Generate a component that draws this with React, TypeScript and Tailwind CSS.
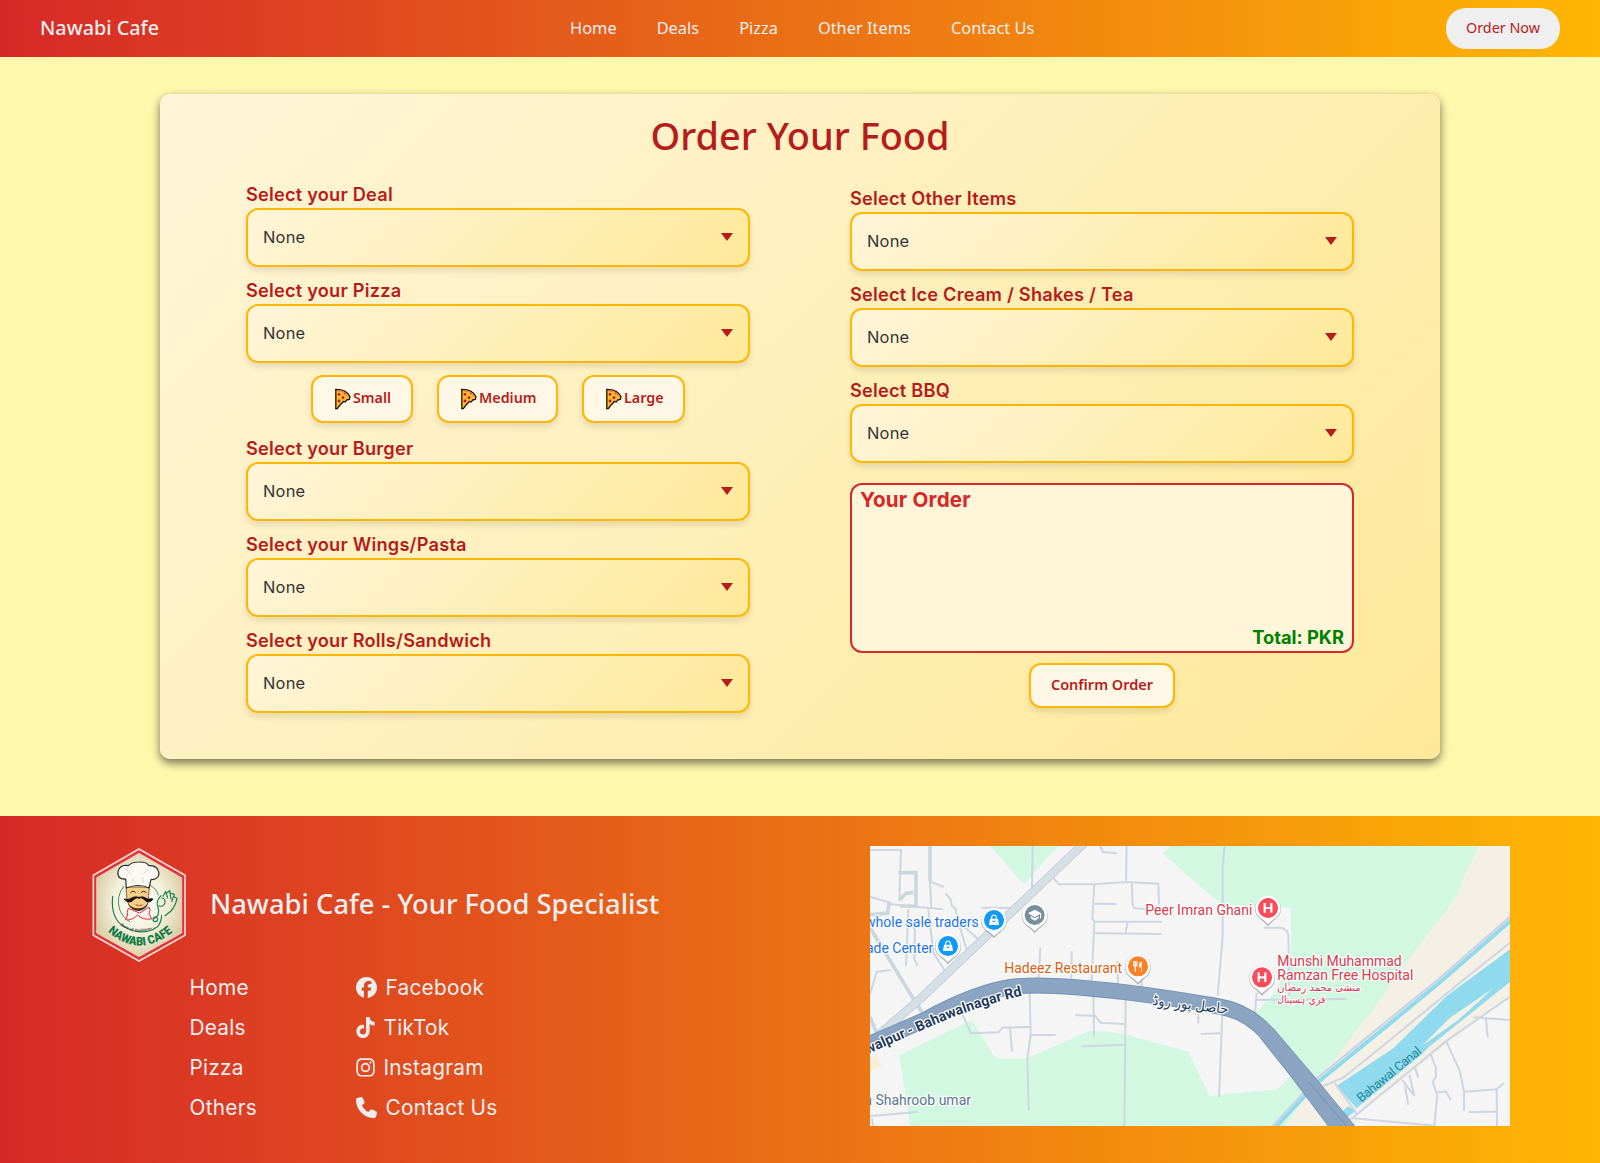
import React from "react";
import { FaFacebook, FaTiktok, FaInstagram, FaPhone } from "react-icons/fa6";

const heading = "font-['Noto_Sans',sans-serif]";
const body = "font-['Inter',sans-serif]";

function PizzaSlice() {
  return (
    <svg className="-mt-px h-[22px] w-5 shrink-0" viewBox="98 65 60 66" aria-hidden="true">
      <path d="M106 70 L106 127 L111 127 L120 115 L130 105 L135 107 L139 101 L147 99 L149 91 Q140 70 106 69 Z" fill="#fdbb2d" stroke="#17120c" strokeWidth="4" strokeLinejoin="round" />
      <path d="M112 74 Q134 73 143 90" fill="none" stroke="#f0824a" strokeWidth="4" />
      <path d="M106 71 V126" stroke="#4a3a10" strokeWidth="4" />
      <circle cx="116" cy="84" r="4" fill="#c8102e" />
      <circle cx="128" cy="94" r="4.2" fill="#c8102e" />
      <circle cx="116" cy="104" r="4.2" fill="#c8102e" />
      <circle cx="133" cy="82" r="2.6" fill="#d8432e" />
    </svg>
  );
}

function Field({ label }: { label: string }) {
  return (
    <div className="mb-[10px]">
      <div className={`${body} h-[27px] leading-[27px] text-[18.2px] font-semibold tracking-[0.22px] text-[#b71c1c] whitespace-nowrap`}>{label}</div>
      <button className="flex h-[59px] w-full items-center justify-between rounded-[12px] border-2 border-[#ffb703] bg-[linear-gradient(135deg,#fff5d9,#ffe999)] bg-origin-border pb-px pl-[15px] pr-[15px] shadow-[0_4px_6px_rgba(0,0,0,0.1)]">
        <span className={`${body} text-[16.4px] tracking-[0.25px] text-[#333]`}>None</span>
        <svg className="h-2 w-3" viewBox="0 0 12 8" aria-hidden="true"><path d="M0 0H12L6 8Z" fill="#b71c1c" /></svg>
      </button>
    </div>
  );
}

function SizeButton({ name, width }: { name: string; width: string }) {
  return (
    <button className={`${heading} ${width} flex h-12 items-center rounded-[12px] border-2 border-[#ffb703] bg-[#fff8e6] pl-5 text-[14.3px] font-semibold text-[#b71c1c] shadow-[0_4px_6px_rgba(0,0,0,0.1)]`}>
      <PizzaSlice />
      <span className="-mt-[3px]">{name}</span>
    </button>
  );
}

function Logo() {
  return (
    <svg className="h-[114px] w-[94px] shrink-0" viewBox="37 55 282 342" aria-label="Nawabi Cafe logo">
      <defs>
        <radialGradient id="cream" cx="50%" cy="48%" r="55%">
          <stop offset="0" stopColor="#ffffff" />
          <stop offset="0.55" stopColor="#f5f0dc" />
          <stop offset="1" stopColor="#d8cda4" />
        </radialGradient>
        <path id="nameArc" d="M84 306 Q180 390 282 304" />
        <path id="tagArc" d="M122 287 Q170 318 216 298" />
      </defs>
      <path d="M178 58 L316 137 V317 L178 394 L41 317 V137 Z" fill="#e0343a" stroke="#f6dcd2" strokeWidth="5" strokeLinejoin="round" />
      <path d="M178 71 L306 144 V310 L178 381 L51 310 V144 Z" fill="url(#cream)" stroke="#f3e6cf" strokeWidth="2" />
      <g fill="none" stroke="#14804c" strokeWidth="3.5" strokeLinecap="round">
        <path d="M99 200 Q92 268 135 292 Q190 322 232 292 Q244 282 246 258" />
        <path d="M132 170 Q108 200 120 240 Q128 262 150 276" strokeWidth="2.5" />
        <path d="M210 166 Q232 178 236 196" strokeWidth="2.5" />
        <path d="M244 198 Q228 216 234 230 Q240 246 234 258 L222 268 M246 205 Q258 206 256 220 Q250 234 238 228 M250 200 L258 186 L264 205 M262 190 L270 183 L274 208 M272 190 L284 194 L276 215 M284 202 L292 206 Q288 228 274 244 L256 258" />
        <circle cx="227" cy="269" r="7" />
      </g>
      <path d="M139 172 L142 212 Q150 240 178 243 Q204 238 206 208 L209 172 Z" fill="#f7cf86" stroke="#3b2b20" strokeWidth="2" />
      <path d="M144 222 Q154 242 178 243 Q200 240 206 220 Q194 236 178 236 Q158 236 144 222 Z" fill="#3b2b20" />
      <path d="M166 222 Q178 230 192 222 L186 228 H170 Z" fill="#c8452f" />
      <path d="M134 208 Q144 222 158 214 Q170 200 178 206 Q186 200 198 214 Q210 222 220 208 Q214 206 206 209 Q190 198 178 203 Q166 198 150 208 Q142 211 134 208Z" fill="#17120e" stroke="#17120e" strokeWidth="3" />
      <path d="M152 190 Q160 180 168 189 M184 189 Q192 180 200 190" fill="none" stroke="#33261a" strokeWidth="3" />
      <path d="M140 175 L138 148 Q112 150 115 126 Q120 104 146 108 Q156 97 178 97 Q200 96 208 108 Q234 106 238 130 Q238 150 214 150 L208 175 Q176 160 140 175Z" fill="#fbf9f2" stroke="#2a2a2a" strokeWidth="3.5" strokeLinejoin="round" />
      <path d="M142 120 Q146 132 156 134 M205 118 Q200 128 192 132 M160 142 V160 M190 142 V160" fill="none" stroke="#d8d4c8" strokeWidth="2.5" />
      <path d="M146 236 Q140 250 144 256 L138 270 Q154 274 174 256 Q190 272 216 268 L208 252 Q214 242 208 232 L180 250 Z" fill="#fff5ee" stroke="#d4303c" strokeWidth="3" strokeLinejoin="round" />
      <text fontFamily="Liberation Serif, serif" fontSize="12" fontWeight="700" fontStyle="italic" fill="#222"><textPath href="#tagArc" textLength="100">Taste of Traditions</textPath></text>
      <text fontFamily="Roboto, sans-serif" fontSize="36" fontWeight="900" fill="#0d7a45"><textPath href="#nameArc" textLength="216" lengthAdjust="spacingAndGlyphs">NAWABI CAFE</textPath></text>
    </svg>
  );
}

const minorRoads = [
  "M0 12H93L88 165", "M0 152L60 170", "M60 175L218 190", "M180 107L222 123", "M180 107L184 185",
  "M227 142L242 160L245 178L257 190L262 220L290 310", "M280 240L325 280", "M335 185L430 186",
  "M115 190L108 360", "M122 235L135 250L133 340L143 360", "M175 190L190 320L225 375", "M62 372L20 378L0 445",
  "M488 0L486 125", "M545 90L567 115H673L768 108L865 113L867 175", "M770 0L768 108", "M690 0L700 18L740 22",
  "M673 115L667 220L673 225L665 405", "M673 173L740 174", "M673 227H875", "M673 262L875 264", "M773 227L767 260",
  "M785 110L788 175Q790 186 798 187L825 189", "M511 305L506 395", "M605 315L604 400", "M742 345L744 420", "M815 400L813 440",
  "M1064 0L1058 60V270L1043 450", "M1182 245H1230Q1253 248 1255 268L1258 450", "M1160 440L1155 502", "M1160 462L1430 459",
  "M278 507L303 562L385 559L397 545L478 543", "M420 545L426 617", "M479 442L482 567L472 637L476 792", "M482 567H557",
  "M615 508L675 509L692 530L762 534", "M670 447L672 572", "M637 601L760 597", "M767 462L763 840", "M0 810L143 798", "M5 817L10 840",
  "M1057 502L1047 752", "M985 500V532", "M992 564L1050 562",
  "M1810 514L1920 522", "M1848 517L1853 574", "M1728 584L1770 677L1782 737V794", "M1782 737L1880 730L1903 710",
  "M1880 730L1881 840", "M1797 798L1880 797", "M1682 624L1698 667V692L1688 707L1702 747L1693 840", "M1702 739L1728 737L1742 762",
  "M1597 702L1633 750L1618 687", "M1605 720L1615 777", "M1635 664L1645 695", "M1450 817L1695 839",
  "M1920 290L1780 402L1560 582L1420 695L1360 720", "M1920 452L1730 584L1440 822", "M1395 712L1460 802",
];
const widerRoads = [
  "M85 80H138V180H90", "M130 140L108 142L88 162", "M58 167L52 202L0 206", "M180 0V107", "M0 245L125 450L160 505", "M0 512L22 567",
];

function Pin({ x, y, color, children }: { x: number; y: number; color: string; children: React.ReactNode }) {
  return (
    <g transform={`translate(${x} ${y})`}>
      <path d="M0 53 C-8 45 -15 37 -23 32 A39 39 0 1 1 23 32 C15 37 8 45 0 53Z" fill="#7d8790" opacity="0.55" transform="translate(0 2)" />
      <path d="M0 48 C-8 41 -14 35 -22 31 A37.5 37.5 0 1 1 22 31 C14 35 8 41 0 48Z" fill="#fff" />
      <circle r="30" fill={color} />
      {children}
    </g>
  );
}

const Bag = () => (
  <>
    <path d="M-12 -4H12L15 15H-15Z" fill="#fff" />
    <path d="M-7 -4V-9Q-6 -15 0 -15Q6 -15 7 -9V-4" fill="none" stroke="#fff" strokeWidth="3.5" />
    <path d="M-5 2Q0 10 5 2" fill="none" stroke="#0f9af5" strokeWidth="3" />
  </>
);
const HMark = () => <path d="M-10 -15V14M10 -15V14M-10 0H10" stroke="#fff" strokeWidth="6.5" fill="none" />;

function Map() {
  return (
    <svg className="block h-[280px] w-[640px] shrink-0" viewBox="0 0 1920 840" fontFamily="Roboto, sans-serif" aria-label="Map">
      <defs>
        <path id="roadLabel" d="M-8 625 L150 555 Q320 478 472 446" />
      </defs>
      <rect width="1920" height="840" fill="#f5f5f5" />
      <g fill="#d3f8e2">
        <path d="M360 0H565L462 115Z" />
        <path d="M905 0L878 22L960 95L1055 175L1263 185V330L1215 440L1155 502L1340 700L1385 652L1540 450L1600 360L1755 160L1825 0Z" />
        <path d="M88 627L305 522L335 567L370 627Q378 638 390 637Q430 641 470 637L660 554Q710 554 760 564L955 617L1018 749L1222 730L1290 662L1340 720L1260 840H120Z" />
      </g>
      <path d="M1825 0L1755 160L1600 360L1540 450L1385 652L1340 700L1245 840H1440L1460 807L1920 447V0Z" fill="#f5f0e5" />
      <path d="M0 637L20 627L35 660L0 677Z" fill="#faeed9" />
      <g fill="#90daee">
        <path d="M1400 720L1570 607L1730 450L1920 310V408L1680 600L1655 625L1460 787Z" />
        <path d="M1370 840L1435 780L1455 795L1400 840Z" />
      </g>
      <path d="M1655 600L1740 515L1870 427L1765 522Z" fill="#f5f0e5" />
      <path d="M1925 222L1710 409L1560 532L1345 707L1218 842" fill="none" stroke="#90daee" strokeWidth="12" />
      <path d="M1920 213L1704 401L1552 524L1340 698L1208 840" fill="none" stroke="#cbd4e0" strokeWidth="7" />
      <g fill="none" stroke="#cdd6e2" strokeWidth="6">{minorRoads.map((d) => <path key={d} d={d} />)}</g>
      <g fill="none" stroke="#cbd7df" strokeWidth="11">{widerRoads.map((d) => <path key={d} d={d} />)}</g>
      <path d="M644 -10L160 450L20 572" fill="none" stroke="#bcc9d8" strokeWidth="26" />
      <path d="M644 -10L160 450L20 572" fill="none" stroke="#d6dee6" strokeWidth="22" />
      <path d="M-20 602L160 524Q350 420 470 419Q560 414 770 439Q900 455 1040 480Q1130 494 1190 561L1300 700L1425 860" fill="none" stroke="#7190b3" strokeWidth="48" />
      <path d="M-20 602L160 524Q350 420 470 419Q560 414 770 439Q900 455 1040 480Q1130 494 1190 561L1300 700L1425 860" fill="none" stroke="#8aa4c1" strokeWidth="43" />
      <path d="M1208 545L1340 700L1456 842H1376L1262 690L1172 577Z" fill="#8aa4c1" />
      <path d="M1208 545L1340 700L1456 842M1376 842L1262 690L1172 577" fill="none" stroke="#7190b3" strokeWidth="2.5" />
      <path d="M1315 707L1430 840" stroke="#7190b3" strokeWidth="3" />

      <Pin x={372} y={222} color="#0f9af5"><Bag /></Pin>
      <Pin x={234} y={300} color="#0f9af5"><Bag /></Pin>
      <Pin x={494} y={207} color="#78909c">
        <path d="M-20 -5L0 -16L20 -5L0 6Z" fill="#fff" />
        <path d="M-12 3V10L0 17L12 10V3L0 10Z" fill="#fff" />
        <path d="M18 -5V10" stroke="#fff" strokeWidth="3" />
      </Pin>
      <Pin x={804} y={361} color="#ff8126">
        <path d="M-13 -16V-6Q-13 0 -8 0Q-3 0 -3 -6V-16M-8 -16V17" fill="none" stroke="#fff" strokeWidth="3.6" />
        <path d="M11 17V-16Q3 -12 3 -2V3H9V17Z" fill="#fff" />
      </Pin>
      <Pin x={1194} y={186} color="#fa4d59"><HMark /></Pin>
      <Pin x={1176} y={394} color="#fa4d59"><HMark /></Pin>

      <g fontSize="42" stroke="#fff" strokeWidth="7" strokeLinejoin="round" paintOrder="stroke">
        <text x="326" y="243" textAnchor="end" fill="#1a73e8">whole sale traders</text>
        <text x="190" y="321" textAnchor="end" fill="#1a73e8">ade Center</text>
        <text x="403" y="381" fill="#d9600f" textLength="353">Hadeez Restaurant</text>
        <text x="826" y="207" fill="#d93a4f" textLength="321">Peer Imran Ghani</text>
        <text x="1294" y="470" fill="#d93a4f" fontSize="31" textAnchor="middle" fontFamily="DejaVu Sans, sans-serif" textLength="144" lengthAdjust="spacingAndGlyphs">فری ہسپتال</text>
        <text x="1347" y="436" fill="#d93a4f" fontSize="31" textAnchor="middle" fontFamily="DejaVu Sans, sans-serif" textLength="250" lengthAdjust="spacingAndGlyphs">منشی محمد رمضان</text>
        <text x="1222" y="360" fill="#d93a4f" textLength="373">Munshi Muhammad</text>
        <text x="1222" y="402" fill="#d93a4f" textLength="408">Ramzan Free Hospital</text>
        <text x="303" y="777" textAnchor="end" fill="#5a7590">n Shahroob umar</text>
        <text fontSize="43" fontWeight="700" fill="#22395b"><textPath href="#roadLabel" textLength="498" lengthAdjust="spacingAndGlyphs">walpur - Bahawalnagar Rd</textPath></text>
        <text transform="translate(960 490) rotate(7)" textAnchor="middle" fontSize="42" fontFamily="DejaVu Sans, sans-serif" fill="#22395b" textLength="228" lengthAdjust="spacingAndGlyphs">حاصل پور روڈ</text>
      </g>
      <text transform="translate(1474 770) rotate(-39.5)" fontSize="38" fill="#20889a" textLength="236">Bahawal Canal</text>
    </svg>
  );
}

const leftTop = ["Select your Deal", "Select your Pizza"];
const leftBottom = ["Select your Burger", "Select your Wings/Pasta", "Select your Rolls/Sandwich"];
const right = ["Select Other Items", "Select Ice Cream / Shakes / Tea", "Select BBQ"];

export default function App() {
  return (
    <div className="flex h-[1163px] w-[1600px] flex-col overflow-hidden bg-[#fff8ad]">
      <header className={`${heading} flex h-[57px] shrink-0 items-center justify-between bg-[linear-gradient(to_right,#d62828,#ffb703)] px-10 text-[#eee]`}>
        <div className="w-[530px] pb-px text-[19.8px] font-medium">Nawabi Cafe</div>
        <nav className="flex flex-1 gap-10 text-[16.4px] whitespace-nowrap">
          <a>Home</a><a>Deals</a><a>Pizza</a><a>Other Items</a><a>Contact Us</a>
        </nav>
        <button className="h-[41px] w-[114px] rounded-[20px] bg-[#efefef] pb-px text-[14.4px] text-[#b71c1c]">Order Now</button>
      </header>

      <main className="mx-auto mt-[37px] h-[665px] w-[1280px] shrink-0 rounded-[10px] bg-[linear-gradient(135deg,#fff5d9,#ffe999)] px-[86px] shadow-[0_4px_10px_rgba(0,0,0,0.55)]">
        <h1 className={`${heading} h-[87px] pt-[13px] text-center text-[37.9px] leading-[56px] font-medium text-[#b71c1c]`}>Order Your Food</h1>
        <div className="grid grid-cols-2 gap-[100px]">
          <section>
            {leftTop.map((l) => <Field key={l} label={l} />)}
            <div className="mt-3 mb-3 flex justify-center gap-6">
              <SizeButton name="Small" width="w-[102px]" />
              <SizeButton name="Medium" width="w-[121px]" />
              <SizeButton name="Large" width="w-[103px]" />
            </div>
            {leftBottom.map((l) => <Field key={l} label={l} />)}
          </section>
          <section className="pt-1">
            {right.map((l) => <Field key={l} label={l} />)}
            <div className={`${body} mt-5 flex h-[170px] flex-col justify-between rounded-[12px] border-2 border-[#d62828] bg-[#fff5d9] px-2`}>
              <h2 className="text-[20.6px] leading-[30px] font-bold tracking-[0.2px] text-[#d62828]">Your Order</h2>
              <p className="text-right text-[18.3px] leading-[27px] font-bold text-[#008000]">Total: PKR</p>
            </div>
            <button className={`${heading} mx-auto mt-[10px] block h-[45px] w-[146px] rounded-[12px] border-2 border-[#ffb703] bg-[#fff8e6] pb-px text-[14.5px] font-semibold text-[#b71c1c] shadow-[0_4px_6px_rgba(0,0,0,0.1)]`}>Confirm Order</button>
          </section>
        </div>
      </main>

      <footer className="mt-[57px] flex flex-1 justify-between bg-[linear-gradient(to_right,#d62828,#ffb703)] pt-[30px] pr-[90px] pl-[92px] text-[#eee]">
        <div>
          <div className="flex items-center gap-6 pt-[2px]">
            <Logo />
            <h2 className={`${heading} pb-[2px] text-[27.35px] font-medium whitespace-nowrap`}>Nawabi Cafe - Your Food Specialist</h2>
          </div>
          <div className={`${body} mt-[5px] ml-[97.5px] flex text-[20.8px] tracking-[0.25px]`}>
            <ul className="w-[166px]">
              {["Home", "Deals", "Pizza", "Others"].map((l) => <li key={l} className="h-10 leading-[41px]">{l}</li>)}
            </ul>
            <ul className="leading-[41px]">
              <li className="flex h-10 items-center gap-[9px]"><FaFacebook className="h-[21px] w-[21px]" />Facebook</li>
              <li className="flex h-10 items-center gap-[9px]"><FaTiktok className="h-[21px] w-[19px]" />TikTok</li>
              <li className="flex h-10 items-center gap-[9px]"><FaInstagram className="h-[21px] w-[19px]" />Instagram</li>
              <li className="flex h-10 items-center gap-[9px]"><FaPhone className="h-[21px] w-[21px]" />Contact Us</li>
            </ul>
          </div>
        </div>
        <Map />
      </footer>
    </div>
  );
}
